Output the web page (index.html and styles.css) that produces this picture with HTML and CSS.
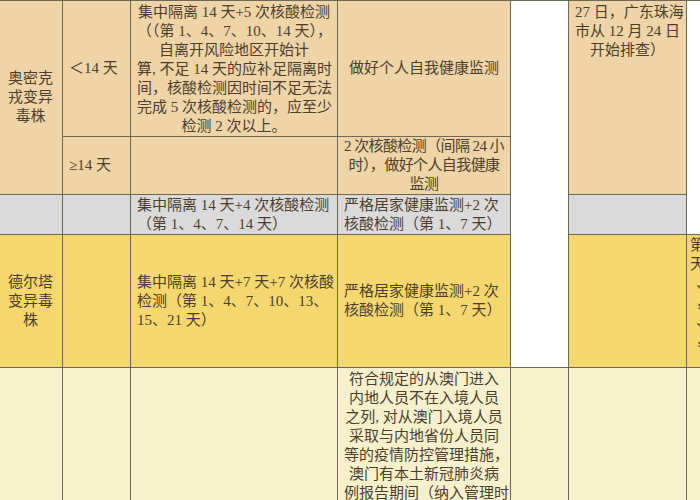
FILE: index.html
```html
<!DOCTYPE html>
<html lang="zh">
<head>
<meta charset="utf-8">
<title>防控措施表</title>
<link rel="stylesheet" href="styles.css">
</head>
<body>
<table class="grid">
  <colgroup>
    <col class="c1"><col class="c2"><col class="c3"><col class="c4"><col class="c5"><col class="c6"><col class="c7">
  </colgroup>
  <tr class="r1 tan">
    <td rowspan="2" class="ctr">奥密克<br>戎变异<br>毒株</td>
    <td class="lt">＜14 天</td>
    <td class="ctr top">集中隔离 14 天+5 次核酸检测<br>（（第 1、4、7、10、14 天），<br>自离开风险地区开始计<br>算, 不足 14 天的应补足隔离时<br>间，核酸检测因时间不足无法<br>完成 5 次核酸检测的，应至少<br>检测 2 次以上。</td>
    <td class="ctr">做好个人自我健康监测</td>
    <td rowspan="4" class="white"></td>
    <td rowspan="2" class="ctr top">27 日，广东珠海<br>市从 12 月 24 日<br>开始排查）</td>
    <td rowspan="3" class="white"></td>
  </tr>
  <tr class="r2 tan">
    <td class="lt">≥14 天</td>
    <td></td>
    <td class="ctr tight">2 次核酸检测（间隔 24 小<br>时），做好个人自我健康<br>监测</td>
  </tr>
  <tr class="r3 gray">
    <td></td>
    <td></td>
    <td class="lt">集中隔离 14 天+4 次核酸检测<br>（第 1、4、7、14 天）</td>
    <td class="lt">严格居家健康监测+2 次<br>核酸检测（第 1、7 天）</td>
    <td></td>
  </tr>
  <tr class="r4 yellow">
    <td class="ctr">德尔塔<br>变异毒<br>株</td>
    <td></td>
    <td class="lt">集中隔离 14 天+7 天+7 次核酸<br>检测（第 1、4、7、10、13、<br>15、21 天）</td>
    <td class="lt">严格居家健康监测+2 次<br>核酸检测（第 1、7 天）</td>
    <td></td>
    <td class="lt top side">第 1 天<br>天内<br><span class="ind">、</span><br><span class="ind">，</span><br><span class="ind">、</span><br><span class="ind">，</span></td>
  </tr>
  <tr class="r5 pale">
    <td></td>
    <td></td>
    <td></td>
    <td class="ctr top">符合规定的从澳门进入<br>内地人员不在入境人员<br>之列, 对从澳门入境人员<br>采取与内地省份人员同<br>等的疫情防控管理措施，<br>澳门有本土新冠肺炎病<br>例报告期间（纳入管理时</td>
    <td></td>
    <td></td>
    <td></td>
  </tr>
</table>
</body>
</html>
```
FILE: styles.css
```css
html, body {
  margin: 0;
  padding: 0;
  width: 700px;
  height: 500px;
  overflow: hidden;
  background: #ffffff;
}

.grid {
  border-collapse: collapse;
  table-layout: fixed;
  width: 830px;
  margin-left: -2px;
  font-family: "Liberation Serif", "Noto Sans CJK SC", serif;
  font-size: 15px;
  line-height: 19px;
  color: #4d3e2c;
}

.c1 { width: 64px; }
.c2 { width: 68px; }
.c3 { width: 207px; }
.c4 { width: 173px; }
.c5 { width: 58px; }
.c6 { width: 118px; }
.c7 { width: 142px; }

.grid td {
  border: 1px solid #6f6857;
  padding: 0 6px;
  white-space: nowrap;
  vertical-align: middle;
  overflow: hidden;
}

.r1 { height: 135px; }
.r2 { height: 57px; }
.r3 { height: 40px; }
.r4 { height: 133px; }
.r5 { height: 132px; }

.tan td { background: #eed4a7; }
.gray td { background: #dadada; }
.yellow td { background: #f5d76f; }
.pale td { background: #f6f1cc; }
.grid td.white { background: #ffffff; }

.ctr { text-align: center; }
.lt { text-align: left; }
.grid td.tight { padding: 0 2px; letter-spacing: -0.6px; }
.grid td.top { vertical-align: top; padding-top: 2px; }
.grid td.side { padding-left: 3px; padding-top: 1px; }
.ind { padding-left: 6px; }
```
